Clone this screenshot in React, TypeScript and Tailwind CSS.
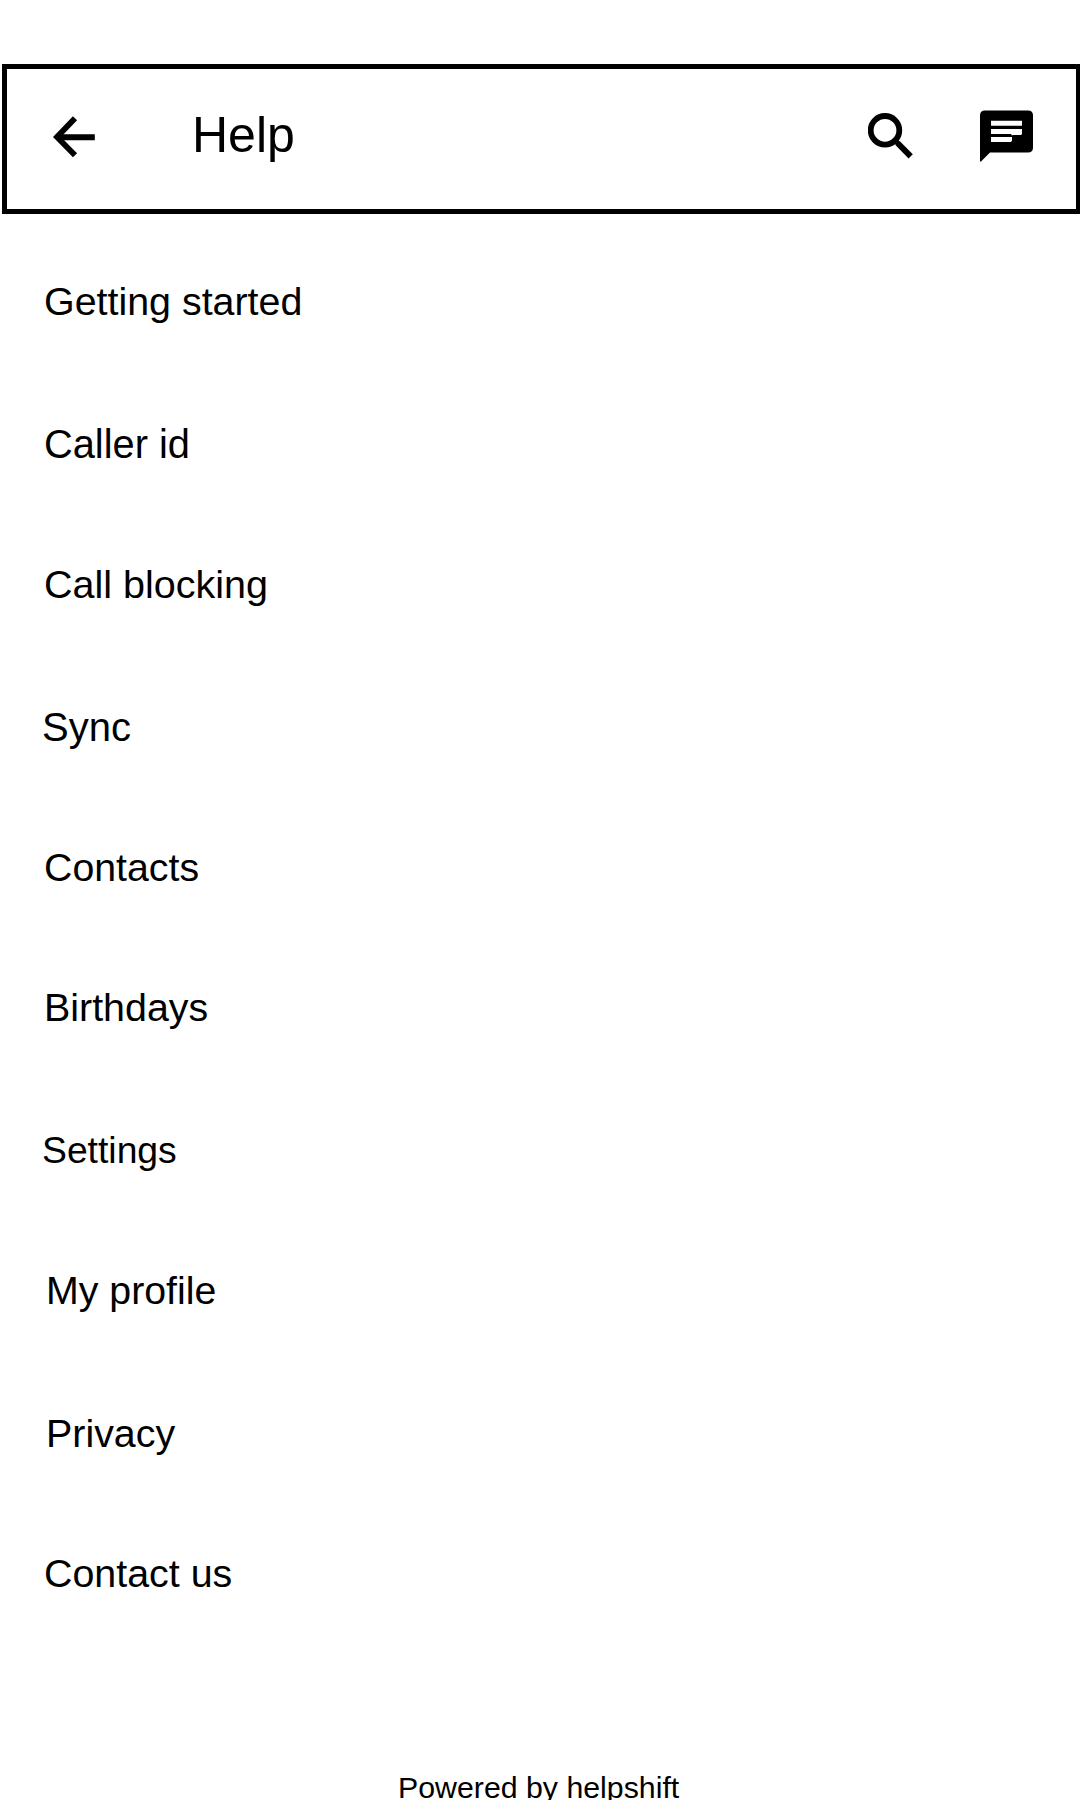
const rows = [
  { label: 'Getting started', row: 'h-[143px] pl-[44px] text-[39.4px]' },
  { label: 'Caller id', row: 'h-[140px] pl-[44px] text-[39.8px]' },
  { label: 'Call blocking', row: 'h-[143px] pl-[44px] text-[39.5px]' },
  { label: 'Sync', row: 'h-[140px] pl-[42px] text-[40px]' },
  { label: 'Contacts', row: 'h-[140px] pl-[44px] text-[39.3px]' },
  { label: 'Birthdays', row: 'h-[143px] pl-[44px] text-[39.4px]' },
  { label: 'Settings', row: 'h-[140px] pl-[42px] text-[37.3px]' },
  { label: 'My profile', row: 'h-[143px] pl-[46px] text-[39.3px]' },
  { label: 'Privacy', row: 'h-[140px] pl-[46px] text-[39.4px]' },
  { label: 'Contact us', row: 'h-[46px] pl-[44px] text-[39.4px]' },
];

export default function App() {
  return (
    <div className="flex h-[1800px] w-[1080px] flex-col overflow-hidden bg-white pt-16 font-['Liberation_Sans',sans-serif] text-black">
      <header className="ml-[2px] flex h-[150px] shrink-0 items-start border-[5px] border-r-4 border-black">
        <button aria-label="Back" className="mt-[47px] ml-[46px]">
          <svg width="43" height="42" viewBox="0 0 43 42" fill="none" stroke="currentColor">
            <path d="M22 2.2 4 21 22 39.3" strokeWidth="5.8" />
            <path d="M5 21.2h36.8" strokeWidth="6" />
          </svg>
        </button>
        <h1 className="mt-[37px] ml-[96px] text-[50px] leading-[58px]">Help</h1>
        <div className="mt-[41px] mr-[43px] ml-auto flex gap-[66px]">
          <svg width="46" height="52" viewBox="0 0 46 52" fill="none" stroke="currentColor">
            <circle cx="17" cy="20.3" r="14.3" strokeWidth="5.8" />
            <path d="m27 30.5 3 3" strokeWidth="5" />
            <path d="m29.5 33 13.2 13.3" strokeWidth="6" />
          </svg>
          <svg width="53" height="52" viewBox="0 0 53 52">
            <path
              d="M5 .6h43q5 0 5 5v32q0 5-5 5H10L1 51.6H0V5.6q0-5 5-5z"
              fill="currentColor"
            />
            <path d="M11 10.8h31v5H11zM11 19h31v5l-1 1h-8l-1 .5-1-1.5H11zM11 27h21v3.5l-1 1.5H11z" fill="white" />
          </svg>
        </div>
      </header>
      <ul className="mt-[64px] shrink-0">
        {rows.map(({ label, row }) => (
          <li key={label} className={`leading-[46px] whitespace-nowrap ${row}`}>
            {label}
          </li>
        ))}
      </ul>
      <footer className="mt-[175px] pl-[398px] text-[30.3px] leading-[34px] whitespace-nowrap">
        Powered by helpshift
      </footer>
    </div>
  );
}
